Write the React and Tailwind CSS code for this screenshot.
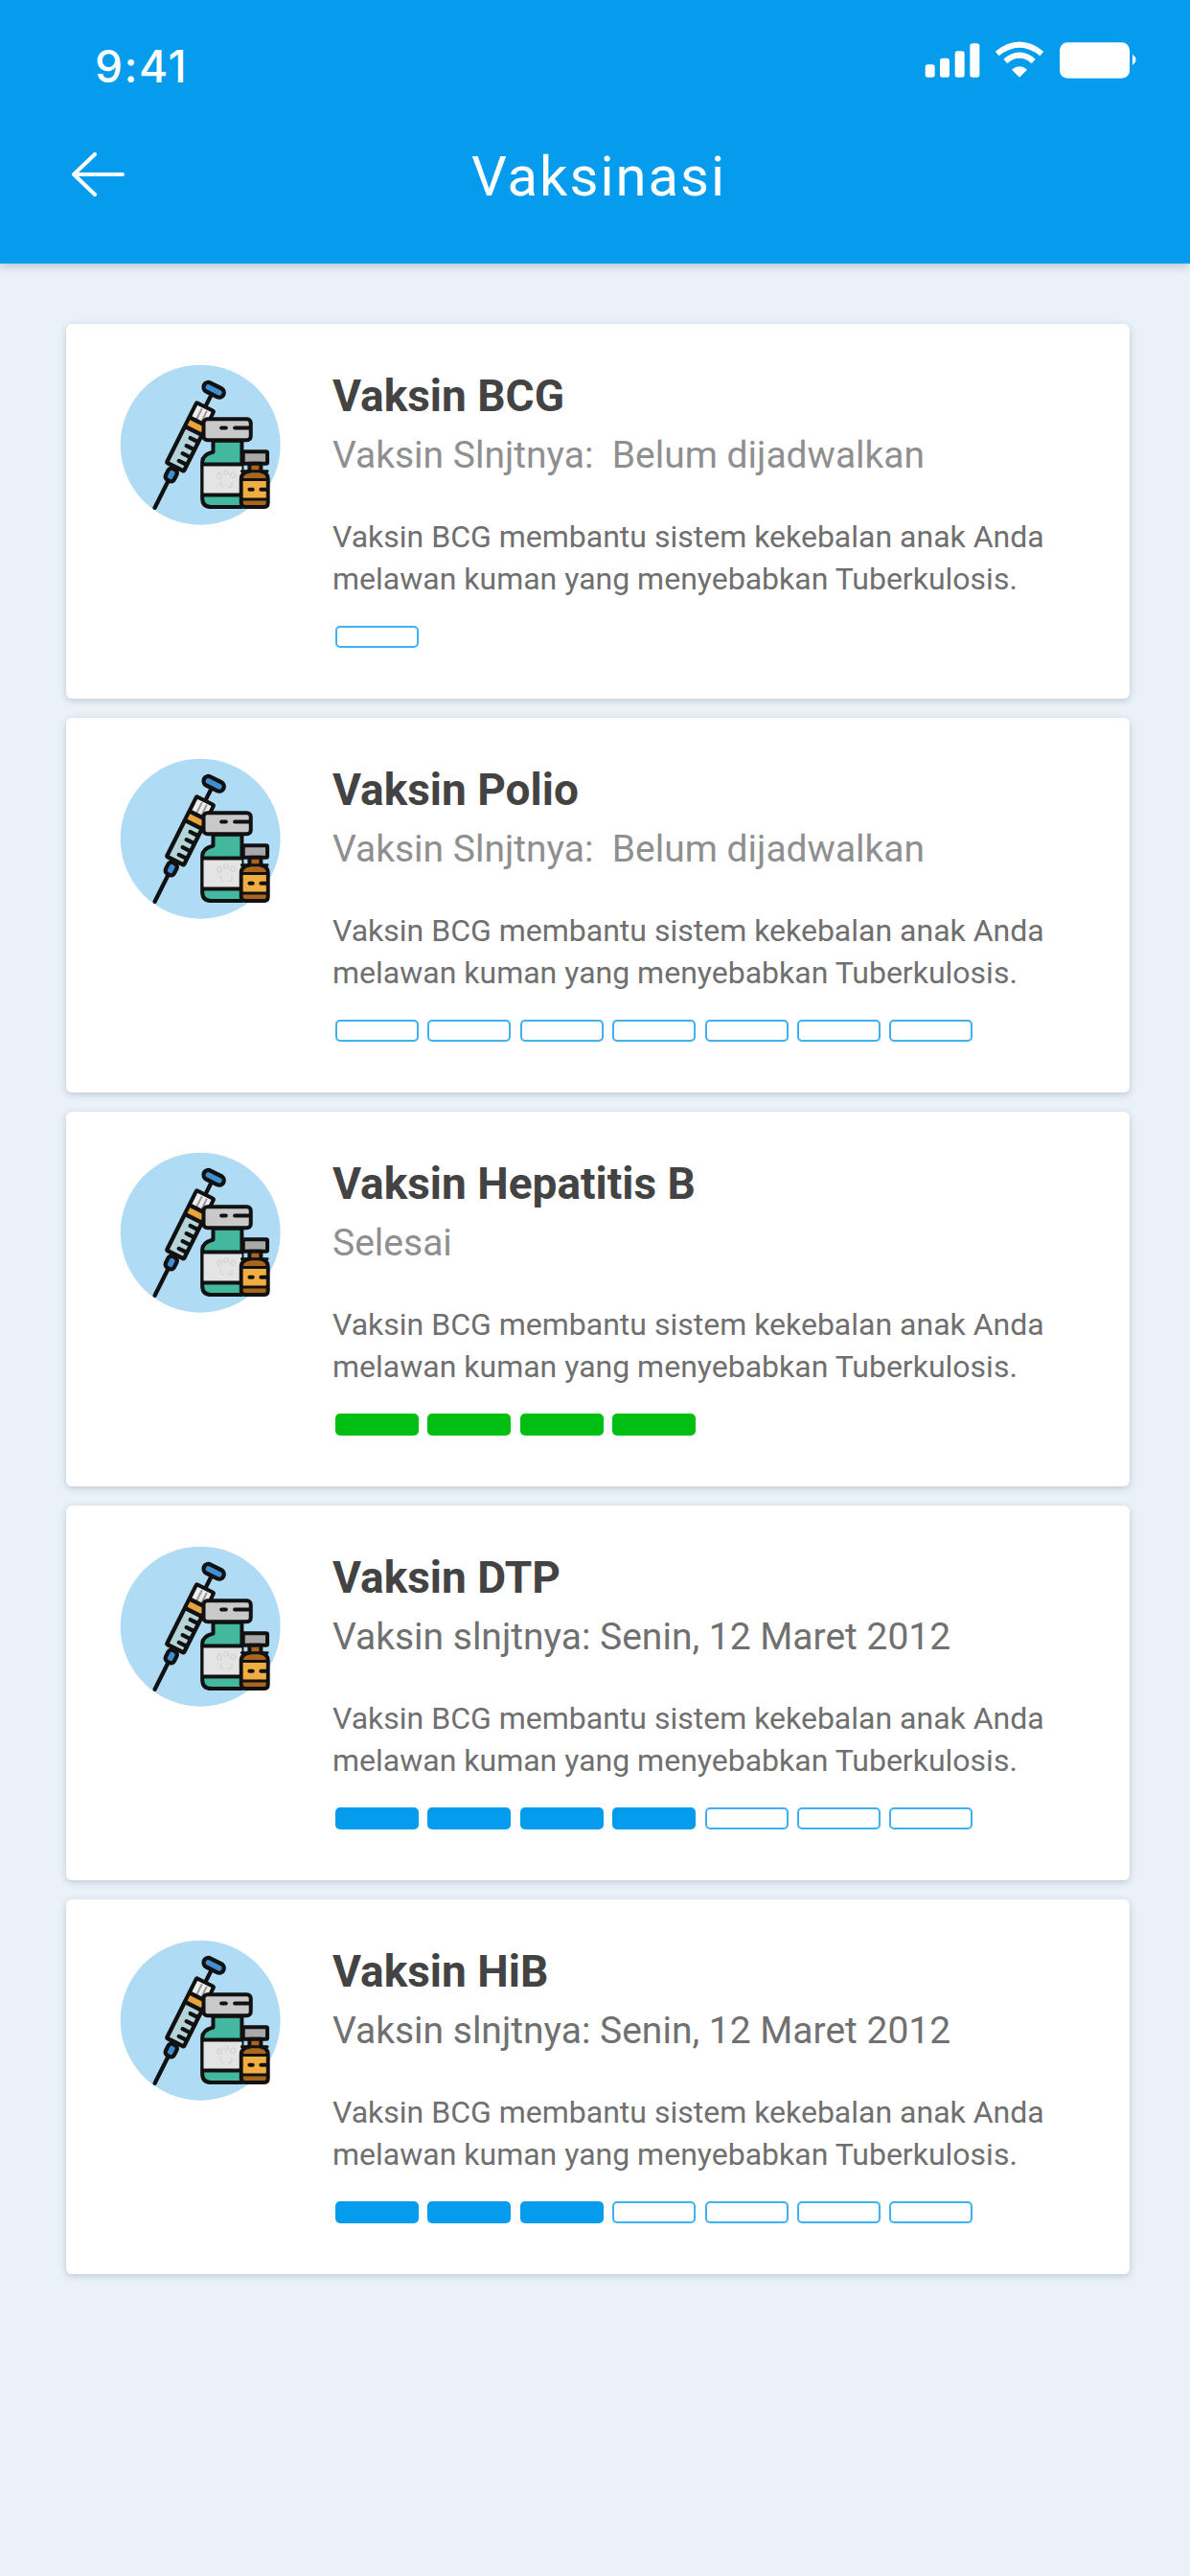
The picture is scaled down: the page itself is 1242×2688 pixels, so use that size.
import React from "react";

function VaccineIcon() {
  return (
    <svg viewBox="75 63 505 505" className="w-[168px] h-[168px] shrink-0 overflow-visible">
      <circle cx="328" cy="313" r="251" fill="#b0dbf4" />
      <g transform="translate(185 510) rotate(26.6)" stroke="#111" strokeWidth="13" strokeLinejoin="round" strokeLinecap="round">
        <line x1="0" y1="0" x2="0" y2="-100" />
        <rect x="-15" y="-135" width="30" height="40" rx="12" fill="#3f8fd2" />
        <line x1="0" y1="-350" x2="0" y2="-400" />
        <rect x="-30" y="-353" width="60" height="210" rx="4" fill="#b5d4da" />
        <rect x="-24" y="-347" width="48" height="52" fill="#eeeeee" stroke="none" />
        <line x1="-7" y1="-342" x2="-7" y2="-305" stroke="#9a9a9a" strokeWidth="6" />
        <line x1="10" y1="-342" x2="10" y2="-305" stroke="#9a9a9a" strokeWidth="6" />
        <rect x="-24" y="-297" width="48" height="22" fill="#e8a33a" stroke="none" />
        <line x1="-26" y1="-302" x2="26" y2="-302" />
        <line x1="-26" y1="-270" x2="26" y2="-270" />
        <line x1="28" y1="-245" x2="2" y2="-245" />
        <line x1="28" y1="-218" x2="2" y2="-218" />
        <line x1="28" y1="-191" x2="2" y2="-191" />
        <line x1="28" y1="-165" x2="2" y2="-165" />
        <rect x="-34" y="-428" width="68" height="30" rx="15" fill="#3f8fd2" />
      </g>
      <g stroke="#111" strokeWidth="12" strokeLinejoin="round" strokeLinecap="round">
        <path d="M368 300 H458 V508 H362 Q334 508 334 480 V366 Q334 345 368 335 Z" fill="#44b79f" />
        <rect x="338" y="378" width="120" height="90" fill="#e4e4e4" stroke="none" />
        <line x1="336" y1="374" x2="458" y2="374" />
        <line x1="336" y1="470" x2="458" y2="470" />
        <rect x="338" y="232" width="148" height="66" rx="12" fill="#c9c9c9" />
        <line x1="394" y1="260" x2="408" y2="260" />
        <line x1="436" y1="260" x2="480" y2="260" />
        <g fill="none" stroke="#c2cdc8" strokeWidth="2.5">
          <rect x="381" y="402" width="13" height="17" rx="6" />
          <circle cx="408" cy="400" r="7" />
          <circle cx="430" cy="408" r="8" />
          <path d="M392 430 Q388 445 400 445 M415 445 H425 Q430 438 426 430" />
        </g>
        <rect x="462" y="334" width="76" height="38" rx="4" fill="#a9a9a9" />
        <path d="M482 372 H518 V396 Q540 400 540 420 V495 Q540 508 526 508 H470 Q456 508 456 495 V420 Q456 400 482 396 Z" fill="#a8661f" />
        <rect x="462" y="424" width="72" height="60" fill="#f0ae42" stroke="none" />
        <line x1="458" y1="396" x2="538" y2="396" strokeWidth="9" />
        <line x1="458" y1="422" x2="538" y2="422" strokeWidth="9" />
        <line x1="458" y1="484" x2="538" y2="484" strokeWidth="9" />
        <line x1="482" y1="453" x2="492" y2="453" />
        <line x1="518" y1="453" x2="534" y2="453" />
      </g>
    </svg>
  );
}

function Pill({ kind }) {
  if (kind === "g") return <div className="w-[87px] h-[23px] rounded-[5px] bg-[#00bf13]" />;
  if (kind === "b") return <div className="w-[87px] h-[23px] rounded-[5px] bg-[#059cee]" />;
  return <div className="w-[87px] h-[23px] rounded-[5px] border-2 border-[#3fb0f1] bg-white" />;
}

function Card({ title, sub, dark, pills }) {
  return (
    <div className="h-[391px] rounded-[6px] bg-white shadow-[0_2px_7px_rgba(60,80,110,0.25)] flex pl-[56px] pt-[43px]">
      <VaccineIcon />
      <div className="ml-[54px] flex flex-col">
        <div className="mt-[5px] text-[46px] leading-[54px] font-bold text-[#434343] whitespace-nowrap">{title}</div>
        <div className={"mt-[12px] text-[39px] leading-[46px] whitespace-pre " + (dark ? "text-[#707070]" : "text-[#8f8f8f]")}>{sub}</div>
        <div className="mt-[40px] text-[32px] leading-[44px] text-[#6f6f6f] whitespace-nowrap">
          <div>Vaksin BCG membantu sistem kekebalan anak Anda</div>
          <div>melawan kuman yang menyebabkan Tuberkulosis.</div>
        </div>
        <div className="mt-[27px] ml-[3px] flex gap-[9.4px]">
          {pills.map((k, i) => (
            <Pill key={i} kind={k} />
          ))}
        </div>
      </div>
    </div>
  );
}

const cards = [
  { title: "Vaksin BCG", sub: "Vaksin Slnjtnya:  Belum dijadwalkan", pills: ["e"] },
  { title: "Vaksin Polio", sub: "Vaksin Slnjtnya:  Belum dijadwalkan", pills: ["e", "e", "e", "e", "e", "e", "e"] },
  { title: "Vaksin Hepatitis B", sub: "Selesai", pills: ["g", "g", "g", "g"] },
  { title: "Vaksin DTP", sub: "Vaksin slnjtnya: Senin, 12 Maret 2012", dark: true, pills: ["b", "b", "b", "b", "e", "e", "e"] },
  { title: "Vaksin HiB", sub: "Vaksin slnjtnya: Senin, 12 Maret 2012", dark: true, pills: ["b", "b", "b", "e", "e", "e", "e"] },
];

export default function App() {
  return (
    <div className="w-[1242px] h-[2688px] bg-[#eaf1f8] font-['Roboto',sans-serif] overflow-hidden">
      <header className="h-[275px] bg-[#059cee] shadow-[0_2px_10px_rgba(40,60,90,0.3)] text-white flex flex-col">
        <div className="h-[139px] flex justify-between pl-[99px] pr-[32px]">
          <div className="mt-[44px] font-['Inter',sans-serif] font-medium text-[46px] leading-[50px] tracking-[1.5px]">9:41</div>
          <svg viewBox="0 0 780 210" className="w-[260px] h-[70px] mt-[30px]">
            <g fill="#fff">
              <rect x="47" y="112" width="30" height="40" rx="8" />
              <rect x="93" y="92" width="30" height="60" rx="8" />
              <rect x="140" y="70" width="30" height="82" rx="8" />
              <rect x="187" y="46" width="30" height="106" rx="8" />
              <path d="M342 152 L318 128 Q342 108 366 128 Z" />
              <rect x="468" y="43" width="219" height="112" rx="24" />
              <path d="M696 80 Q718 97 696 114 Z" />
            </g>
            <g fill="none" stroke="#fff" strokeWidth="18">
              <path d="M298 102 Q342 64 386 102" />
              <path d="M272 78 Q342 22 412 78" />
            </g>
          </svg>
        </div>
        <div className="relative h-[90px] flex items-center justify-center pl-[8px]">
          <svg viewBox="0 0 60 52" className="absolute left-[73px] top-[20px] w-[60px] h-[52px]">
            <path d="M4 23 H55 M26 2 L4 23 L26 44" fill="none" stroke="#fff" strokeWidth="4" strokeLinecap="round" strokeLinejoin="round" />
          </svg>
          <span className="text-[58px] leading-[66px] tracking-[2px]">Vaksinasi</span>
        </div>
      </header>
      <main className="mt-[63px] pl-[69px] pr-[63px] flex flex-col gap-[20px]">
        {cards.map((c) => (
          <Card key={c.title} {...c} />
        ))}
      </main>
    </div>
  );
}
